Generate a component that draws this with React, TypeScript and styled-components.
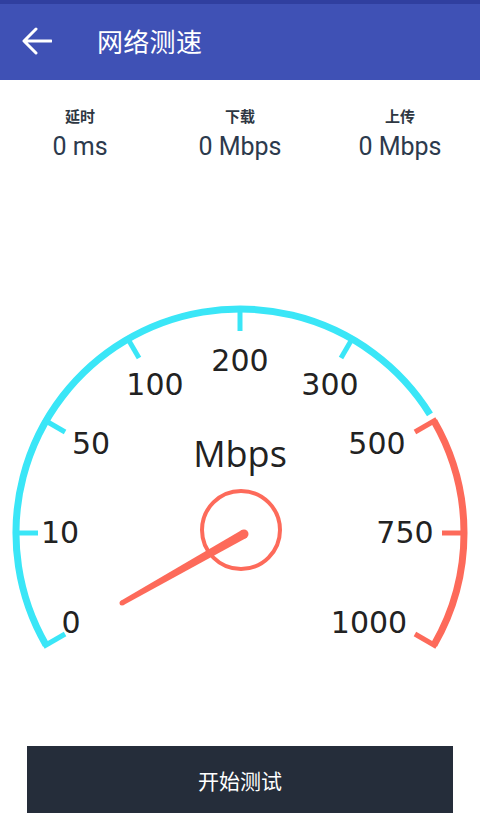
import React from "react";
import styled, { createGlobalStyle } from "styled-components";

const Global = createGlobalStyle`
  html, body { margin: 0; padding: 0; background: #ffffff; }
  body { font-family: "Noto Sans", "Noto Sans CJK SC", sans-serif; }
`;

const Page = styled.div`
  width: 480px;
  height: 826px;
  display: flex;
  flex-direction: column;
  background: #ffffff;
  overflow: hidden;
`;

const Header = styled.header`
  height: 76px;
  border-top: 4px solid #303f9f;
  background: #3f51b5;
  display: flex;
  align-items: center;
  padding-left: 22px;
  gap: 45px;
  box-sizing: content-box;
`;

const BackButton = styled.div`
  width: 30px;
  height: 28px;
  display: flex;
  align-items: center;
  justify-content: center;
  margin-top: -2px;
`;

const Title = styled.h1`
  margin: 0;
  margin-top: -4px;
  font-family: "Noto Sans CJK SC", sans-serif;
  font-weight: 400;
  font-size: 26px;
  color: #ffffff;
  letter-spacing: 0.3px;
`;

const Stats = styled.section`
  display: grid;
  grid-template-columns: repeat(3, 1fr);
  padding-top: 26px;
  height: 64px;
`;

const Stat = styled.div`
  display: flex;
  flex-direction: column;
  align-items: center;
`;

const StatLabel = styled.div`
  font-family: "Noto Sans CJK SC", sans-serif;
  font-weight: 700;
  font-size: 15px;
  line-height: 20px;
  color: #2e3742;
`;

const StatValue = styled.div`
  font-family: "Roboto", "Noto Sans", sans-serif;
  font-size: 25px;
  line-height: 30px;
  color: #2c3a4d;
  margin-top: 6px;
`;

const GaugeWrap = styled.div`
  margin-top: 120px;
  height: 370px;
  display: flex;
  justify-content: center;
`;

const Footer = styled.div`
  flex: 1;
  display: flex;
  align-items: flex-start;
  justify-content: center;
  padding-top: 86px;
`;

const StartButton = styled.button`
  width: 426px;
  height: 67px;
  border: none;
  border-radius: 0;
  background: #252d3a;
  color: #ffffff;
  font-family: "Noto Sans CJK SC", sans-serif;
  font-size: 21px;
  cursor: pointer;
`;

const CYAN = "#3ae6f7";
const RED = "#fd6a5a";
const CX = 240;
const CY = 243;
const R = 224;

const pt = (deg: number, r: number) => {
  const a = (deg * Math.PI) / 180;
  return [CX + r * Math.cos(a), CY - r * Math.sin(a)];
};

const ticks = [210, 180, 150, 120, 90, 60, 30, 0, -30];

const labels: { t: string; x: number; y: number }[] = [
  { t: "0", x: 71, y: 343 },
  { t: "10", x: 60, y: 253 },
  { t: "50", x: 91, y: 164 },
  { t: "100", x: 155, y: 105 },
  { t: "200", x: 240, y: 81 },
  { t: "300", x: 330, y: 105 },
  { t: "500", x: 377, y: 164 },
  { t: "750", x: 405, y: 253 },
  { t: "1000", x: 369, y: 343 },
];

const Gauge: React.FC = () => {
  const [sx, sy] = pt(210, R);
  const [cx1, cy1] = pt(32, R);
  const [rx0, ry0] = pt(30, R);
  const [rx1, ry1] = pt(-30, R);
  return (
    <svg width="480" height="370" viewBox="0 0 480 370">
      <path
        d={`M ${sx} ${sy} A ${R} ${R} 0 0 1 ${cx1} ${cy1}`}
        fill="none"
        stroke={CYAN}
        strokeWidth={7}
      />
      <path
        d={`M ${rx0} ${ry0} A ${R} ${R} 0 0 1 ${rx1} ${ry1}`}
        fill="none"
        stroke={RED}
        strokeWidth={7}
      />
      {ticks.map((d) => {
        const [x1, y1] = pt(d, R + 3);
        const [x2, y2] = pt(d, R - 22);
        return (
          <line
            key={d}
            x1={x1}
            y1={y1}
            x2={x2}
            y2={y2}
            stroke={d <= 30 ? RED : CYAN}
            strokeWidth={5}
          />
        );
      })}
      {labels.map((l) => (
        <text
          key={l.t}
          x={l.x}
          y={l.y}
          textAnchor="middle"
          fontFamily='"DejaVu Sans", sans-serif'
          fontSize={30}
          fill="#222222"
        >
          {l.t}
        </text>
      ))}
      <text
        x={240}
        y={177}
        textAnchor="middle"
        fontFamily='"Open Sans", "Noto Sans", sans-serif'
        fontSize={36}
        fill="#222222"
      >
        Mbps
      </text>
      <circle cx={241} cy={240} r={39} fill="none" stroke={RED} strokeWidth={4} />
      <polygon
        points="246.2,247.9 123.2,315.2 120.8,310.8 241.8,240.1"
        fill={RED}
      />
      <circle cx={244} cy={244} r={4.5} fill={RED} />
      <circle cx={122} cy={313} r={2.5} fill={RED} />
    </svg>
  );
};

const stats = [
  { label: "延时", value: "0 ms" },
  { label: "下载", value: "0 Mbps" },
  { label: "上传", value: "0 Mbps" },
];

export default function App() {
  return (
    <Page>
      <Global />
      <Header>
        <BackButton>
          <svg width="30" height="28" viewBox="0 0 30 28">
            <path
              d="M29 14 H3 M14 2 L2 14 L14 26"
              fill="none"
              stroke="#ffffff"
              strokeWidth={3}
              strokeLinecap="round"
              strokeLinejoin="round"
            />
          </svg>
        </BackButton>
        <Title>网络测速</Title>
      </Header>
      <Stats>
        {stats.map((s) => (
          <Stat key={s.label}>
            <StatLabel>{s.label}</StatLabel>
            <StatValue>{s.value}</StatValue>
          </Stat>
        ))}
      </Stats>
      <GaugeWrap>
        <Gauge />
      </GaugeWrap>
      <Footer>
        <StartButton>开始测试</StartButton>
      </Footer>
    </Page>
  );
}
